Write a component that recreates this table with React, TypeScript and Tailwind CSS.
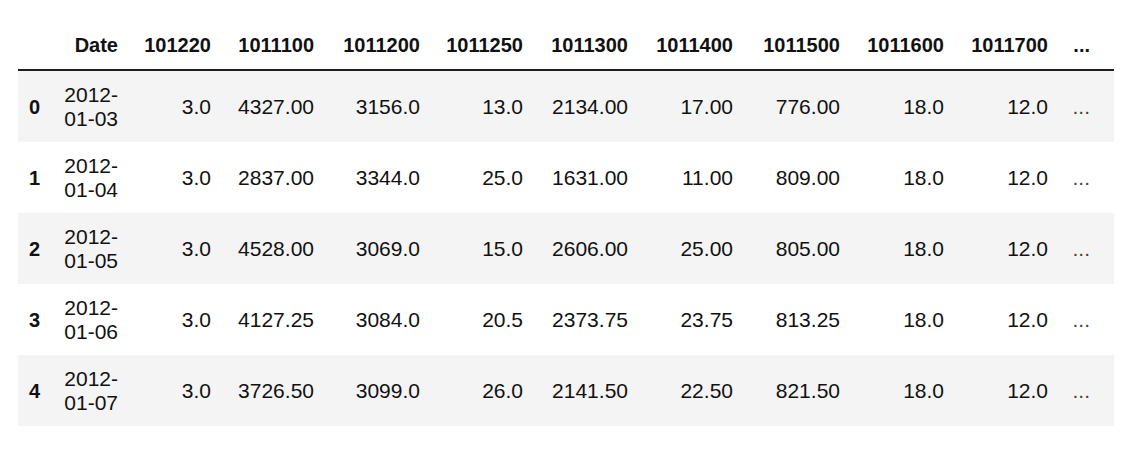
import React from "react";

const cols = "grid-cols-[32px_78px_93px_103px_106px_103px_105px_105px_107px_104px_104px_56px]";

const headers = ["", "Date", "101220", "1011100", "1011200", "1011250", "1011300", "1011400", "1011500", "1011600", "1011700", "..."];

const rows: { idx: string; date: [string, string]; vals: string[] }[] = [
  { idx: "0", date: ["2012-", "01-03"], vals: ["3.0", "4327.00", "3156.0", "13.0", "2134.00", "17.00", "776.00", "18.0", "12.0"] },
  { idx: "1", date: ["2012-", "01-04"], vals: ["3.0", "2837.00", "3344.0", "25.0", "1631.00", "11.00", "809.00", "18.0", "12.0"] },
  { idx: "2", date: ["2012-", "01-05"], vals: ["3.0", "4528.00", "3069.0", "15.0", "2606.00", "25.00", "805.00", "18.0", "12.0"] },
  { idx: "3", date: ["2012-", "01-06"], vals: ["3.0", "4127.25", "3084.0", "20.5", "2373.75", "23.75", "813.25", "18.0", "12.0"] },
  { idx: "4", date: ["2012-", "01-07"], vals: ["3.0", "3726.50", "3099.0", "26.0", "2141.50", "22.50", "821.50", "18.0", "12.0"] },
];

export default function App() {
  return (
    <div
      className="w-[1142px] h-[450px] bg-white pt-[26px] pl-[18px] text-[#111]"
      style={{ fontFamily: '"Liberation Sans", Arial, sans-serif' }}
    >
      <div className="w-[1096px]">
        <div className={`grid ${cols} h-[45px] items-start pt-[7px] border-b-2 border-[#1e1e1e] text-[20px] leading-[24px] font-bold`}>
          {headers.map((h, i) => (
            <div key={i} className={`text-right ${i === headers.length - 1 ? "pr-[24px]" : "pr-[10px]"}`}>
              {h}
            </div>
          ))}
        </div>
        {rows.map((r, ri) => (
          <div
            key={r.idx}
            className={`grid ${cols} h-[71px] items-center text-[21px] leading-[24px] ${ri % 2 === 0 ? "bg-[#f4f4f4]" : "bg-white"}`}
          >
            <div className="text-right pr-[10px] font-bold text-[20px]">{r.idx}</div>
            <div className="text-right pr-[10px]">
              {r.date[0]}
              <br />
              {r.date[1]}
            </div>
            {r.vals.map((v, vi) => (
              <div key={vi} className="text-right pr-[10px]">
                {v}
              </div>
            ))}
            <div className="text-right pr-[24px] text-[#444]">...</div>
          </div>
        ))}
      </div>
    </div>
  );
}
